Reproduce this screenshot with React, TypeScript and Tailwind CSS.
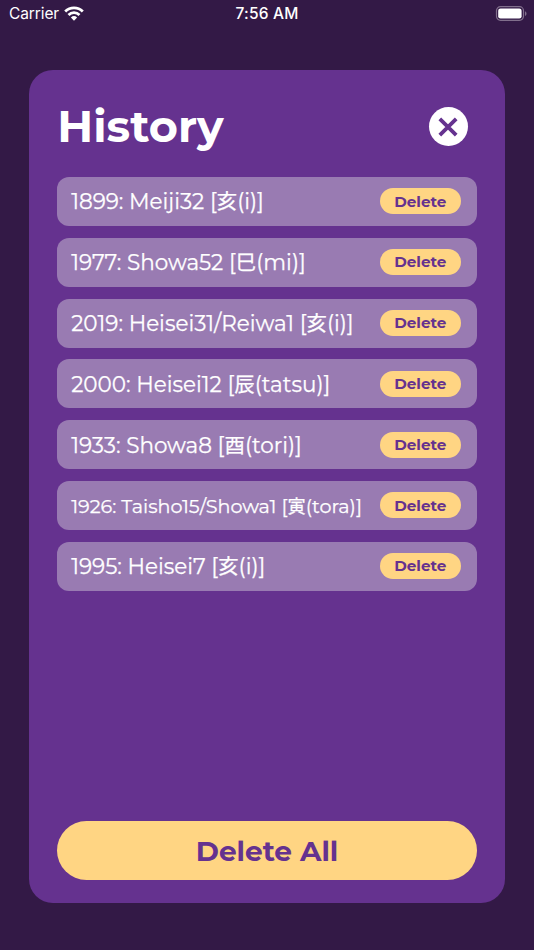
type Entry = { year: string; era: string; sign: string; reading: string; small?: boolean };

const entries: Entry[] = [
  { year: "1899", era: "Meiji32", sign: "亥", reading: "i" },
  { year: "1977", era: "Showa52", sign: "巳", reading: "mi" },
  { year: "2019", era: "Heisei31/Reiwa1", sign: "亥", reading: "i" },
  { year: "2000", era: "Heisei12", sign: "辰", reading: "tatsu" },
  { year: "1933", era: "Showa8", sign: "酉", reading: "tori" },
  { year: "1926", era: "Taisho15/Showa1", sign: "寅", reading: "tora", small: true },
  { year: "1995", era: "Heisei7", sign: "亥", reading: "i" },
];

function StatusBar() {
  return (
    <header className="grid h-7 grid-cols-3 items-center pl-[9px] pr-[7px] font-['Inter','Liberation_Sans',sans-serif] text-[15.5px] leading-7 text-white">
      <div className="flex items-center gap-[5px]">
        <span className="w-[50px] text-[15.5px] tracking-[-0.1px]">Carrier</span>
        <svg className="-mt-[2px]" width="20" height="15" viewBox="0 0 20 15" fill="none" stroke="white" strokeWidth="2.8">
          <path d="M1.2 5.4a12.6 12.6 0 0 1 17.6 0" />
          <path d="M4.5 8.9a7.9 7.9 0 0 1 11 0" />
          <path d="M10 14.8 6.9 11.5a4.5 4.5 0 0 1 6.2 0Z" fill="white" stroke="none" />
        </svg>
      </div>
      <span className="pr-[2px] text-center font-medium tracking-[0.2px]">7:56 AM</span>
      <svg className="-mt-[2px] justify-self-end" width="32" height="15" viewBox="0 0 32 15">
        <rect x="1.5" y="0.7" width="27" height="13.6" rx="4" fill="none" stroke="#816f8c" strokeWidth="1.2" />
        <rect x="3.2" y="2.5" width="23.4" height="10" rx="2.3" fill="white" />
        <path d="M30 5.2c2 .8 2 3.9 0 4.7Z" fill="#816f8c" />
      </svg>
    </header>
  );
}

function HistoryRow({ entry }: { entry: Entry }) {
  return (
    <li className="flex h-[49px] items-center justify-between rounded-[12px] bg-[#997bb2] pl-[14px] pr-4">
      <span
        className={`whitespace-nowrap leading-8 text-white [-webkit-text-stroke:0.25px_white] ${entry.small ? "mt-px text-[19.15px]" : "text-[21.5px]"}`}
      >
        {entry.year}: {entry.era} [<span className="text-[0.95em] leading-none">{entry.sign}</span>({entry.reading})]
      </span>
      <button className="flex h-[26px] w-[81px] items-center justify-center rounded-full bg-[#ffd583] pt-px text-[15.2px] font-bold text-[#65328f]">
        Delete
      </button>
    </li>
  );
}

export default function App() {
  return (
    <div className="flex h-[950px] w-[534px] flex-col bg-[#331946] font-['Montserrat','Inter','Noto_Sans_CJK_JP',sans-serif]">
      <StatusBar />
      <main className="mx-[28.7px] mt-[42.3px] flex h-[832.5px] flex-col rounded-[24px] bg-[#65328f] px-[28.5px] pb-[23px]">
        <div className="flex h-[106.7px] items-center justify-between pr-[9px] pt-[6px]">
          <h1 className="text-[44.5px] font-bold leading-none text-white">History</h1>
          <button aria-label="Close" className="flex size-[39px] items-center justify-center rounded-full bg-white">
            <svg width="20" height="20" viewBox="0 0 20 20" stroke="#65328f" strokeWidth="3.8">
              <path d="m1.8 1.8 16.4 16.4M18.2 1.8 1.8 18.2" />
            </svg>
          </button>
        </div>
        <ul className="flex flex-col gap-[11.8px]">
          {entries.map((entry) => (
            <HistoryRow key={entry.year} entry={entry} />
          ))}
        </ul>
        <button className="mt-auto flex h-[58.5px] shrink-0 items-center justify-center rounded-full bg-[#ffd583] text-[28px] font-bold text-[#65328f]">
          Delete All
        </button>
      </main>
    </div>
  );
}
